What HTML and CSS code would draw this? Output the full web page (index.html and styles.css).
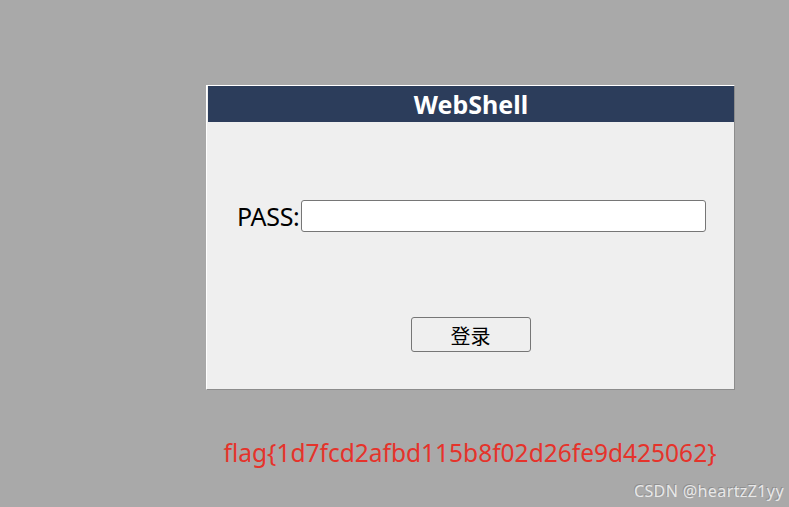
FILE: index.html
```html
<!DOCTYPE html>
<html>
<head>
<meta charset="utf-8">
<link rel="stylesheet" href="styles.css">
</head>
<body>
<div class="page">
  <div class="box">
    <div class="header">WebShell</div>
    <form class="form">
      <div class="row">
        <label class="label">PASS:</label>
        <input class="input" type="password">
      </div>
      <div class="actions">
        <button class="btn" type="button">登录</button>
      </div>
    </form>
  </div>
  <div class="flag">flag{1d7fcd2afbd115b8f02d26fe9d425062}</div>
</div>
<div class="watermark">CSDN @heartzZ1yy</div>
</body>
</html>
```
FILE: styles.css
```css
html, body {
  margin: 0;
  height: 100%;
}
body {
  background: #a9a9a9;
  font-family: "Noto Sans", "Noto Sans CJK SC", sans-serif;
  position: relative;
  overflow: hidden;
}
.page {
  padding: 85px 0 0 206px;
  width: 528px;
}
.box {
  width: 526px;
  height: 303px;
  border: 1px solid;
  border-color: #ffffff #8c8c8c #8c8c8c #ffffff;
  background: #efefef;
  padding: 0 0 0 1px;
  box-sizing: content-box;
}
.header {
  height: 36px;
  background: #2c3d5b;
  color: #ffffff;
  font-weight: bold;
  font-size: 25px;
  line-height: 36px;
  text-align: center;
}
.form {
  margin: 0;
  padding: 78px 28px 0 29px;
}
.row {
  display: flex;
  align-items: center;
  height: 32px;
}
.label {
  font-size: 25px;
  color: #000;
  margin-left: 0;
  letter-spacing: -0.3px;
}
.input {
  flex: 1;
  height: 32px;
  box-sizing: border-box;
  border: 1px solid #767676;
  border-radius: 3px;
  background: #fff;
  margin: 0 0 0 1px;
}
.actions {
  display: flex;
  justify-content: center;
  padding-top: 85px;
}
.btn {
  width: 120px;
  height: 35px;
  box-sizing: border-box;
  border: 1px solid #767676;
  border-radius: 3px;
  background: #efefef;
  font-family: "Noto Sans CJK SC", sans-serif;
  font-size: 20px;
  line-height: 1;
  color: #000;
  padding: 2px 0 0;
  margin-left: -2px;
}
.flag {
  margin-top: 47px;
  text-align: center;
  color: #e5332b;
  font-size: 24.5px;
  line-height: 32px;
}
.watermark {
  position: absolute;
  right: 5px;
  bottom: 5px;
  font-family: "Noto Sans", sans-serif;
  font-size: 16px;
  letter-spacing: 0.4px;
  color: #e8e8e8;
  text-shadow: -1px -1px 0 #8f8f8f;
}
```
